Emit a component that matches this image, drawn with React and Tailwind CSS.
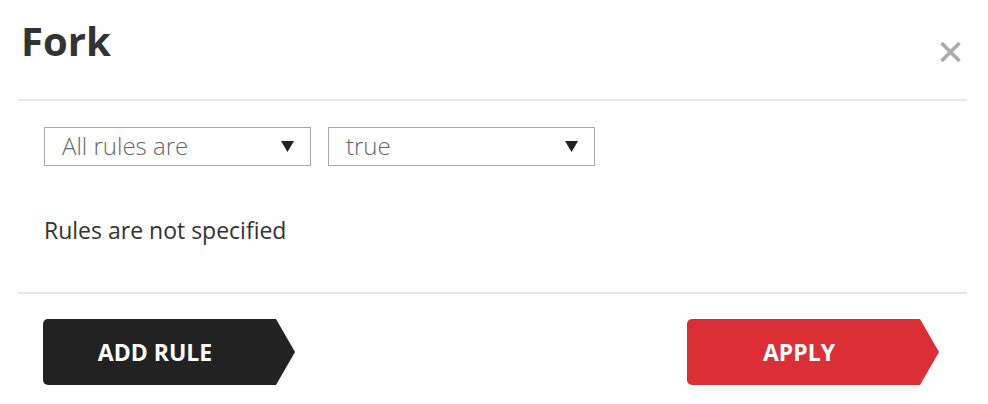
export default function App() {
  return (
    <div className="w-[988px] h-[404px] bg-white font-['Open_Sans',sans-serif] text-[#333] overflow-hidden">
      {/* Header */}
      <div className="flex justify-between items-start h-[99px] pl-[21px] pr-[26px]">
        <h1 className="mt-[21px] text-[40px] leading-[40px] font-bold text-[#333]">Fork</h1>
        <button className="mt-[41px] w-[23px] h-[22px] text-[#aaa]" title="Close">
          <svg viewBox="0 0 22 22" className="w-[23px] h-[22px]">
            <path d="M2 2L20 20M20 2L2 20" stroke="currentColor" strokeWidth="3.6" strokeLinecap="butt" />
          </svg>
        </button>
      </div>
      <div className="h-[2px] ml-[18px] mr-[21px] bg-[#e6e6e6]"></div>

      {/* Body */}
      <div className="pl-[44px] pt-[26px] h-[191px]">
        <div className="flex gap-[17px]">
          <Select label="All rules are" />
          <Select label="true" />
        </div>
        <p className="mt-[49px] text-[23px] leading-[30px] text-[#333]">Rules are not specified</p>
      </div>
      <div className="h-[2px] ml-[18px] mr-[21px] bg-[#e6e6e6]"></div>

      {/* Footer */}
      <div className="flex justify-between pl-[43px] pr-[49px] pt-[25px]">
        <ArrowButton label="ADD RULE" className="bg-[#222]" />
        <ArrowButton label="APPLY" className="bg-[#dc2f35]" />
      </div>
    </div>
  )
}

function Select({ label }) {
  return (
    <div className="w-[267px] h-[39px] border border-[#a9a9a9] flex items-center justify-between pl-[17px] pr-[16px]">
      <span className="text-[24px] leading-none font-light text-[#666] -mt-[2px]">{label}</span>
      <svg viewBox="0 0 13 11" className="w-[13px] h-[11px]">
        <path d="M0 0H13L6.5 11Z" fill="#222" />
      </svg>
    </div>
  )
}

function ArrowButton({ label, className }) {
  return (
    <button
      className={`w-[252px] h-[66px] rounded-l-[5px] flex items-center justify-center pr-[28px] text-white text-[23px] font-bold leading-none [clip-path:polygon(0_0,calc(100%_-_19px)_0,100%_50%,calc(100%_-_19px)_100%,0_100%)] ${className}`}
    >
      {label}
    </button>
  )
}
